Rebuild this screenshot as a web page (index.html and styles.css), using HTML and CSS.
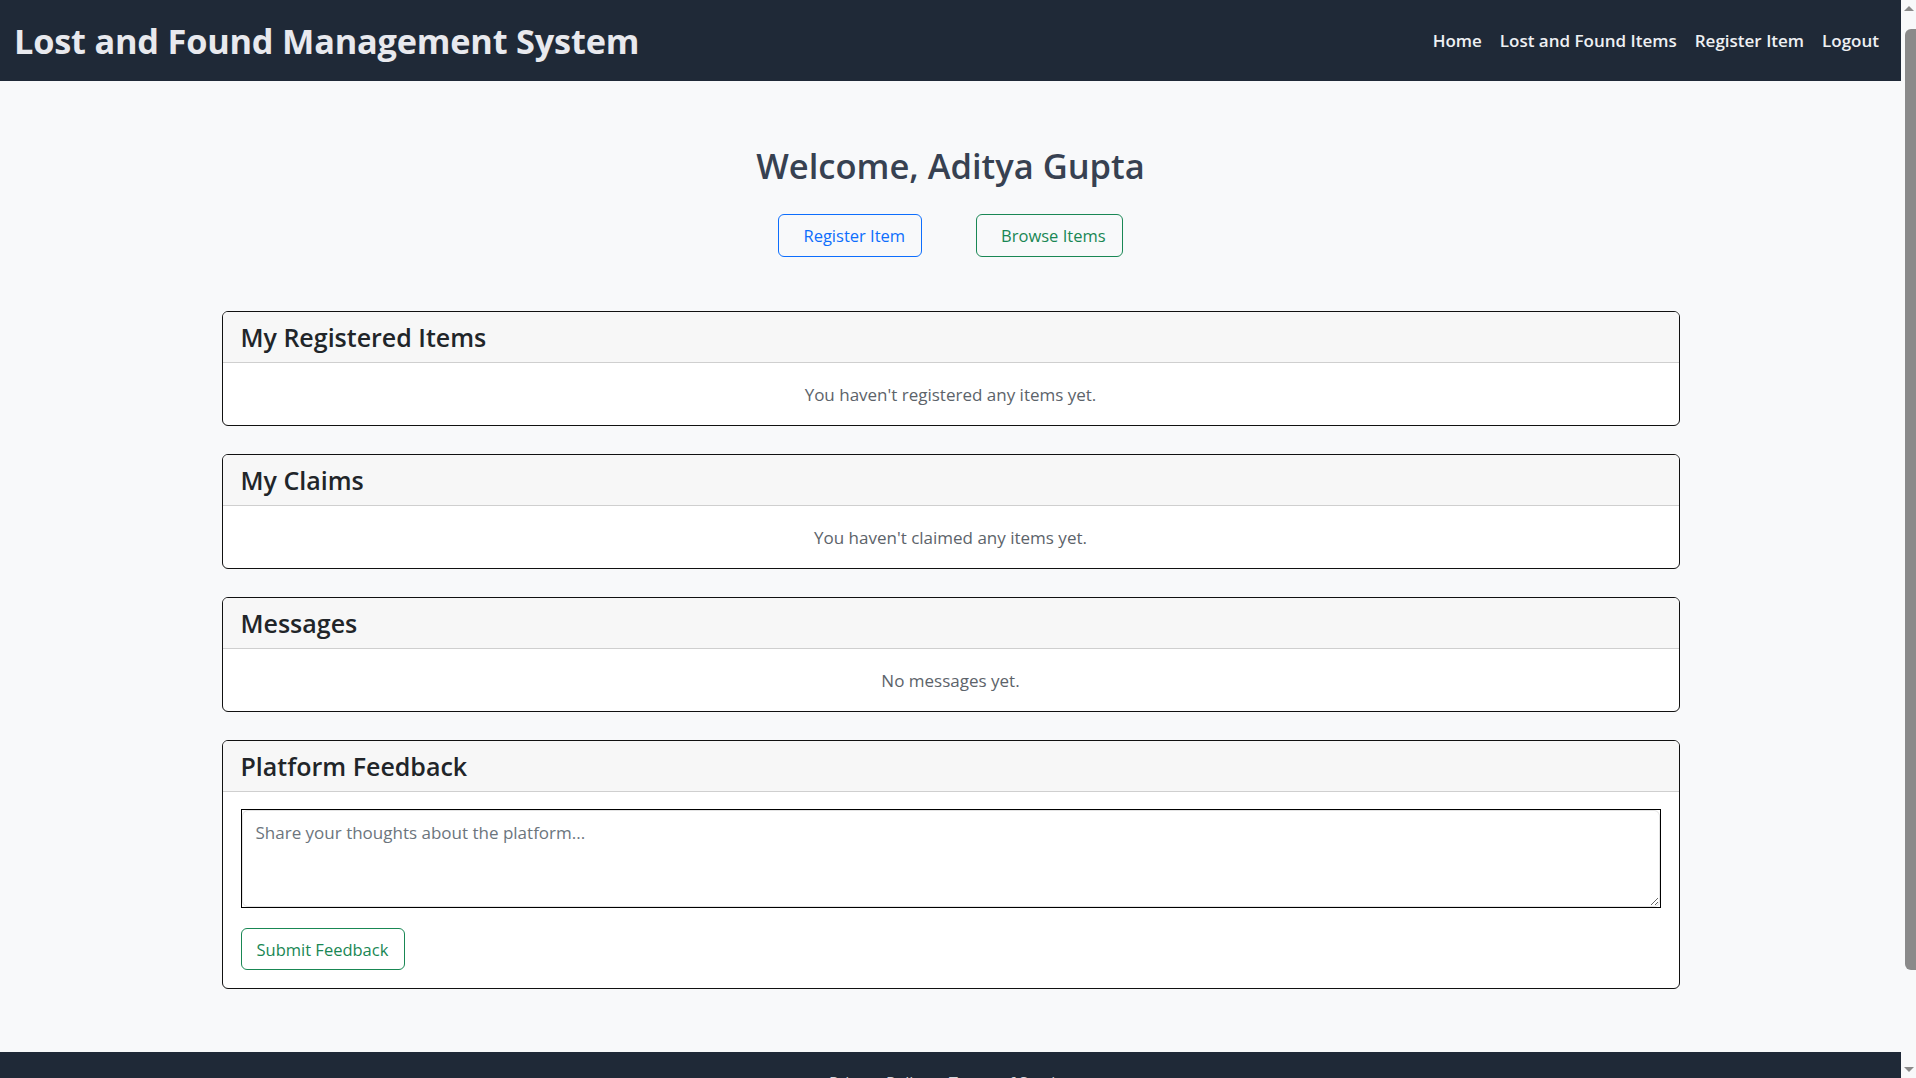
FILE: index.html
```html
<!DOCTYPE html>
<html lang="en">
<head>
<meta charset="utf-8">
<title>Dashboard - Lost and Found Management System</title>
<link rel="stylesheet" href="styles.css">
</head>
<body>
<div class="viewport">
  <header class="topbar">
    <h1 class="brand">Lost and Found Management System</h1>
    <nav class="nav">
      <a href="#">Home</a>
      <a href="#">Lost and Found Items</a>
      <a href="#">Register Item</a>
      <a href="#">Logout</a>
    </nav>
  </header>

  <main class="main">
    <h2 class="welcome">Welcome, Aditya Gupta</h2>
    <div class="actions">
      <a href="#" class="btn btn-blue">Register Item</a>
      <a href="#" class="btn btn-green">Browse Items</a>
    </div>

    <section class="card">
      <div class="card-header"><h3>My Registered Items</h3></div>
      <div class="card-body empty">You haven't registered any items yet.</div>
    </section>

    <section class="card">
      <div class="card-header"><h3>My Claims</h3></div>
      <div class="card-body empty">You haven't claimed any items yet.</div>
    </section>

    <section class="card">
      <div class="card-header"><h3>Messages</h3></div>
      <div class="card-body empty">No messages yet.</div>
    </section>

    <section class="card">
      <div class="card-header"><h3>Platform Feedback</h3></div>
      <div class="card-body feedback">
        <div class="field">
          <textarea placeholder="Share your thoughts about the platform..."></textarea>
        </div>
        <button class="btn btn-green btn-submit" type="button">Submit Feedback</button>
      </div>
    </section>
  </main>

  <footer class="footer">
    <a href="#">Privacy Policy</a>
    <a href="#">Terms of Service</a>
  </footer>
</div>
<div class="scrollbar">
  <div class="arrow up"></div>
  <div class="track"><div class="thumb"></div></div>
  <div class="arrow down"></div>
</div>
</body>
</html>
```
FILE: styles.css
```css
* { box-sizing: border-box; }
html, body { height: 100%; }
body {
  margin: 0;
  display: flex;
  overflow: hidden;
  background: #f8f9fa;
  font-family: "Open Sans", "Noto Sans", sans-serif;
  color: #212529;
}
.viewport {
  flex: 1;
  height: 100vh;
  overflow: hidden;
  display: flex;
  flex-direction: column;
}
.topbar {
  flex: none;
  height: 81px;
  background: #1f2937;
  display: flex;
  align-items: center;
  justify-content: space-between;
  padding: 0 22px 0 14px;
}
.brand {
  margin: 0;
  font-size: 34.3px;
  font-weight: 700;
  color: #e8e9ee;
  letter-spacing: -0.2px;
}
.nav { display: flex; gap: 18px; }
.nav a {
  color: #eef0f3;
  text-decoration: none;
  font-size: 17px;
  font-weight: 600;
}
.main {
  flex: none;
  padding-top: 61px;
  padding-bottom: 35px;
}
.welcome {
  margin: 0;
  text-align: center;
  font-size: 34.5px;
  line-height: 48px;
  font-weight: 600;
  color: #374151;
}
.actions {
  display: flex;
  justify-content: center;
  gap: 54px;
  margin-top: 24px;
  margin-bottom: 54px;
}
.btn {
  display: inline-flex;
  align-items: center;
  height: 43px;
  padding: 0 16px 0 24px;
  border: 1px solid;
  border-radius: 6px;
  background: transparent;
  font-family: inherit;
  font-size: 16.5px;
  text-decoration: none;
}
.btn-blue { color: #0d6efd; border-color: #0d6efd; }
.btn-green { color: #198754; border-color: #198754; }
.card {
  width: 1458px;
  margin: 0 auto 28px;
  background: #fff;
  border: 1px solid #111;
  border-radius: 6px;
  overflow: hidden;
}
.card-header {
  height: 51px;
  display: flex;
  align-items: center;
  padding: 0 18px;
  background: #f7f7f7;
  border-bottom: 1px solid #cfcfcf;
}
.card-header h3 {
  margin: 0;
  font-size: 25px;
  font-weight: 600;
  color: #212529;
}
.card-body.empty {
  height: 62px;
  display: flex;
  align-items: center;
  justify-content: center;
  font-size: 17px;
  color: #5c636a;
}
.card-body.feedback {
  padding: 17px 18px 18px;
  display: flex;
  flex-direction: column;
  align-items: flex-start;
  gap: 20px;
}
.field {
  width: 100%;
  border: 1px solid #000;
}
.field textarea {
  display: block;
  width: 100%;
  height: 97px;
  border: 1px solid #e3e3e3;
  border-radius: 6px;
  padding: 10px 13px;
  font-family: inherit;
  font-size: 17px;
  color: #212529;
  resize: vertical;
  outline: none;
}
.field textarea::placeholder { color: #6c757d; }
.btn-submit {
  height: 42px;
  padding: 0 16px 0 15px;
}
.footer {
  flex: 1;
  background: #1f2937;
  display: flex;
  justify-content: center;
  gap: 20px;
  padding-top: 20px;
}
.footer a {
  color: #d1d5db;
  text-decoration: none;
  font-size: 16px;
}
.scrollbar {
  flex: none;
  width: 15px;
  height: 100vh;
  background: #f8f9fa;
  display: flex;
  flex-direction: column;
  align-items: center;
}
.arrow {
  flex: none;
  height: 17px;
  width: 15px;
  display: flex;
  align-items: center;
  justify-content: center;
}
.arrow::before {
  content: "";
  border-left: 5px solid transparent;
  border-right: 5px solid transparent;
}
.arrow.up::before { border-bottom: 5px solid #8a8a8a; }
.arrow.down::before { border-top: 5px solid #8a8a8a; }
.track {
  flex: 1;
  width: 100%;
  padding: 12px 0 0 4px;
}
.thumb {
  width: 11px;
  height: 941px;
  background: #8a8a8a;
  border-radius: 6px 0 0 6px;
}
```
